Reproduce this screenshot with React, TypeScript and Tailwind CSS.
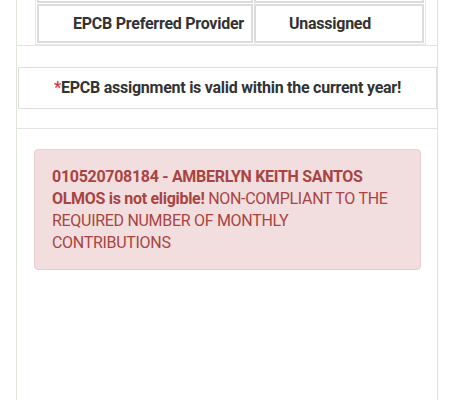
import React from "react";

export default function App() {
  return (
    <div
      className="w-[455px] h-[400px] overflow-hidden bg-white text-[#333]"
      style={{ fontFamily: "Roboto, 'Liberation Sans', sans-serif" }}
    >
      <div className="ml-[16px] w-[422px] h-[400px] border-x border-[#dfe7d6] flex flex-col">
        {/* table section */}
        <div className="pl-[18px] pr-[11px] border-b border-[#e3e3e3]">
          <div className="border-x border-b border-[#e8e8e8] px-[1px] pb-[1px]">
            <div className="grid grid-cols-[216px_1fr] gap-x-[1px]">
              <div className="h-[3px] border-x-2 border-b-2 border-[#dcdcdc]" />
              <div className="h-[3px] border-x-2 border-b-2 border-[#dcdcdc]" />
            </div>
            <div className="grid grid-cols-[216px_1fr] gap-x-[1px] mt-[1px]">
              <div className="h-[39px] border-2 border-[#dcdcdc] flex items-center pl-[34px] text-[16px] font-bold tracking-[-0.25px]">
                EPCB Preferred Provider
              </div>
              <div className="h-[39px] border-2 border-[#dcdcdc] flex items-center pl-[33px] text-[16px] font-bold tracking-[-0.25px]">
                Unassigned
              </div>
            </div>
          </div>
        </div>
        {/* spacer band */}
        <div className="h-[21px]" />
        {/* notice */}
        <div className="ml-[1px] h-[42px] border border-[#dedede] flex items-center justify-center text-[16px] font-bold tracking-[-0.25px]">
          <span>
            <span className="text-[#d9383a]">*</span>EPCB assignment is valid within the current year!
          </span>
        </div>
        <div className="h-[20px] border-b border-[#e3e3e3]" />
        {/* alert */}
        <div className="pl-[17px] pr-[16px] pt-[20px]">
          <div className="rounded-[4px] border border-[#ebccd1] bg-[#f2dede] text-[#a94442] pl-[17px] pr-[15px] pt-[16px] pb-[15px] text-[16px] leading-[22px] tracking-[-0.3px]">
            <span className="font-bold">010520708184 - AMBERLYN KEITH SANTOS OLMOS is not eligible!</span>{" "}
            NON-COMPLIANT TO THE REQUIRED NUMBER OF MONTHLY CONTRIBUTIONS
          </div>
        </div>
      </div>
    </div>
  );
}
